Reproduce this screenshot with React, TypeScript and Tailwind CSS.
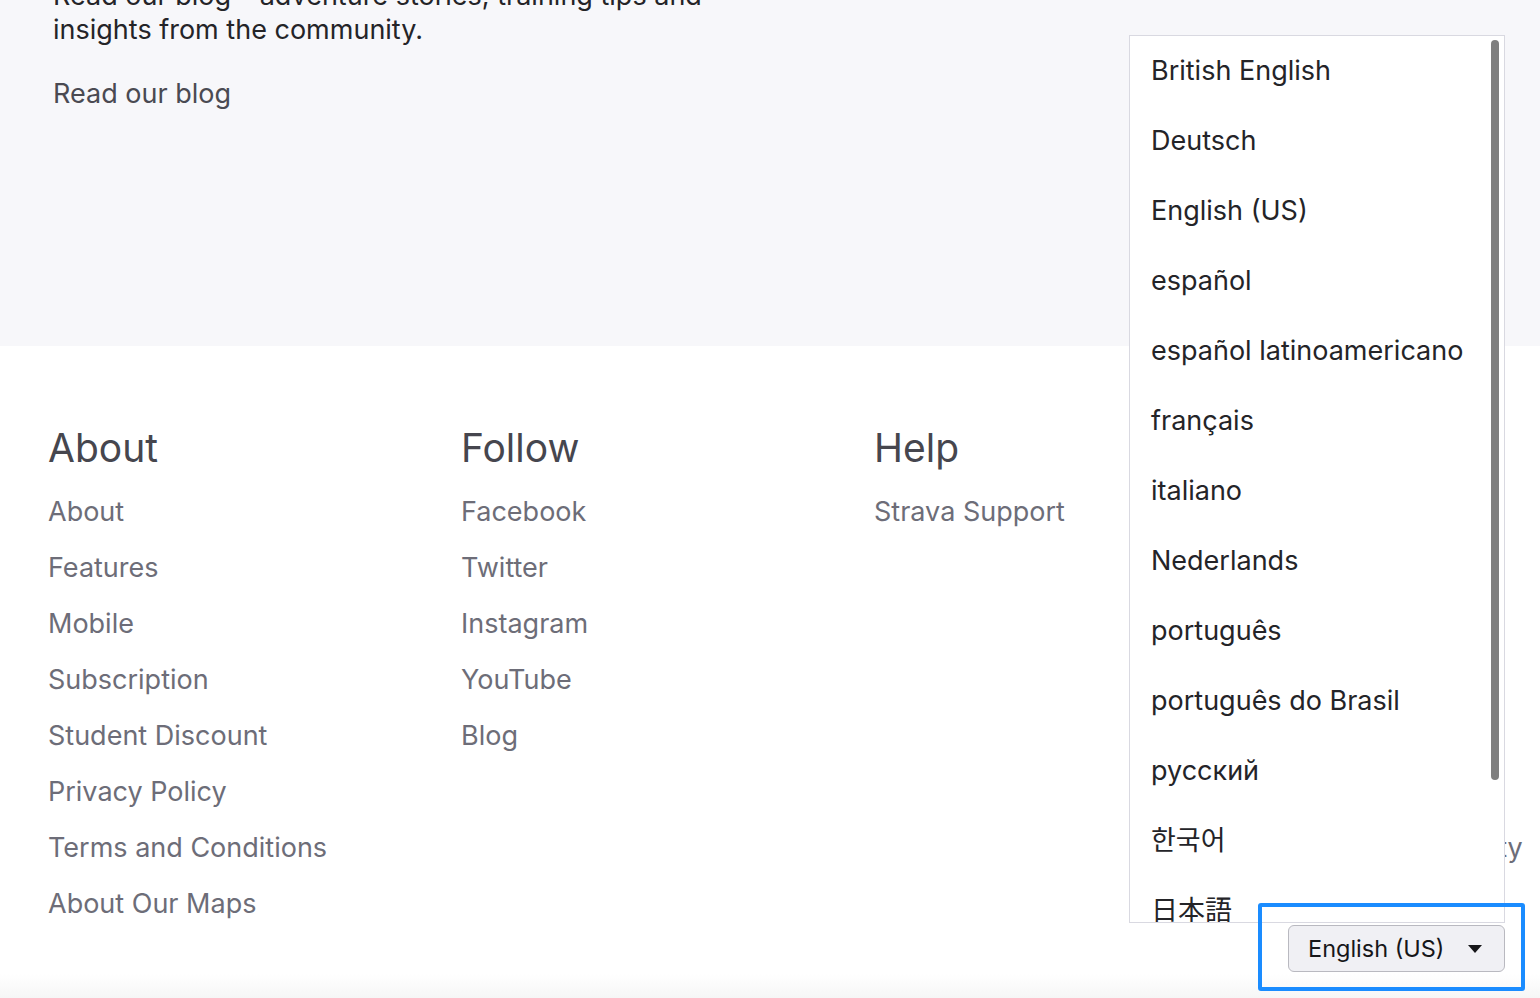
import React from 'react';

const font = { fontFamily: 'Inter, "Noto Sans CJK KR", "Noto Sans CJK JP", sans-serif' };

const columns = [
  {
    title: 'About',
    links: ['About', 'Features', 'Mobile', 'Subscription', 'Student Discount', 'Privacy Policy', 'Terms and Conditions', 'About Our Maps'],
  },
  { title: 'Follow', links: ['Facebook', 'Twitter', 'Instagram', 'YouTube', 'Blog'] },
  { title: 'Help', links: ['Strava Support'] },
  {
    title: 'More',
    links: ['Careers', 'Press', 'Business', 'Partner Centre', 'Developers', 'Labs', 'Community Safety'],
  },
];

const languages = [
  'British English',
  'Deutsch',
  'English (US)',
  'español',
  'español latinoamericano',
  'français',
  'italiano',
  'Nederlands',
  'português',
  'português do Brasil',
  'русский',
  '한국어',
  '日本語',
];

const App: React.FC = () => {
  return (
    <div className="relative w-[1540px] h-[998px] overflow-hidden bg-white" style={font}>
      {/* Blog teaser */}
      <div className="h-[346px] bg-[#f7f7fa] px-[53px] flex flex-col items-start">
        <p className="-mt-[21px] text-[27px] leading-[34px] text-[#242428] w-[720px]">
          Read our blog – adventure stories, training tips and insights from the community.
        </p>
        <a className="mt-[30px] text-[27px] leading-[34px] text-[#4a4a52]">Read our blog</a>
      </div>

      {/* Footer columns */}
      <div className="grid grid-cols-[413px_413px_413px_1fr] px-[48px] pt-[78px] h-[628px]">
        {columns.map(col => (
          <div key={col.title} className="flex flex-col">
            <h3 className="text-[39px] leading-[48px] text-[#46464e] mb-[12px]">{col.title}</h3>
            {col.links.map(link => (
              <a key={link} className="text-[27px] leading-[56px] text-[#6d6d78] whitespace-nowrap">
                {link}
              </a>
            ))}
          </div>
        ))}
      </div>
      <div className="h-[24px] bg-gradient-to-b from-white to-[#f6f6f6]" />

      {/* Language list */}
      <div className="absolute left-[1129px] top-[35px] w-[376px] h-[888px] bg-white border border-[#d9d9e1] overflow-hidden">
        <ul>
          {languages.map(lang => (
            <li key={lang} className="pl-[21px] text-[27px] leading-[70px] text-[#242428] whitespace-nowrap">
              {lang}
            </li>
          ))}
        </ul>
        <div className="absolute right-[5px] top-[4px] w-[8px] h-[740px] rounded-full bg-[#7f7f7f]" />
      </div>

      {/* Focus ring + select */}
      <div className="absolute left-[1258px] top-[903px] w-[267px] h-[88px] border-[4px] border-[#1a8cff] rounded-[3px]" />
      <div className="absolute left-[1288px] top-[925px] w-[217px] h-[47px] rounded-[6px] border border-[#b9b9c0] bg-[#f0f0f4] flex items-center pl-[19px] pr-[22px]">
        <span className="text-[23.5px] text-[#161619] flex-1">English (US)</span>
        <svg width="14" height="8" viewBox="0 0 14 8">
          <path d="M0 0 H14 L7 8 Z" fill="#161619" />
        </svg>
      </div>
    </div>
  );
};

export default App;
